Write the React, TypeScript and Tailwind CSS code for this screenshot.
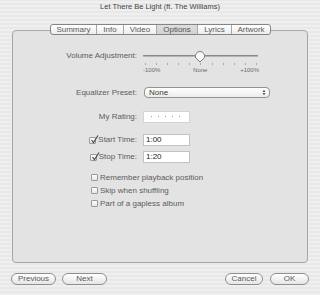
import React from "react"

const tabs = ["Summary", "Info", "Video", "Options", "Lyrics", "Artwork"]
const tabWidths = ["w-[45px]", "w-[27px]", "w-[33px]", "w-[41px]", "w-[34px]", "w-[39px]"]

function Check({ on }: { on?: boolean }) {
  return (
    <span className="relative w-[7px] h-[7px] shrink-0 rounded-[1px] border border-[#999] bg-[linear-gradient(#ffffff,#e6e6e6)]">
      {on && (
        <svg className="absolute -top-[3px] left-0" width="9" height="9" viewBox="0 0 9 9">
          <path d="M1.5 5 L3.5 7.5 L8 0.5" fill="none" stroke="#444" strokeWidth="1.1" />
        </svg>
      )}
    </span>
  )
}

function PillButton({ label, w }: { label: string; w: string }) {
  return (
    <button className={`${w} h-[12px] rounded-full border border-[#8f8f8f] bg-[linear-gradient(#ffffff,#e6e6e6)] text-[8px] leading-none text-[#5a5a5a] flex items-center justify-center`}>
      {label}
    </button>
  )
}

export default function App() {
  return (
    <div className="w-[320px] h-[295px] flex flex-col font-['Liberation_Sans',Arial,sans-serif] text-[8px] text-[#5c5c5c] bg-[repeating-linear-gradient(0deg,#efefef_0px,#efefef_2px,#e8e8e8_2px,#e8e8e8_4px)]">
      {/* title */}
      <div className="h-[13px] flex items-center justify-center text-[7.5px] text-[#444]">
        Let There Be Light (ft. The Williams)
      </div>

      {/* tabs */}
      <div className="relative z-10 mt-[11px] flex justify-center pl-[1px]">
        <div className="flex h-[11px] rounded-[3px] border border-[#858585] bg-[linear-gradient(#ffffff,#ededed)] overflow-hidden">
          {tabs.map((t, i) => (
            <div
              key={t}
              className={`${tabWidths[i]} flex items-center justify-center leading-none text-[8px] ${
                i > 0 ? "border-l border-[#a8a8a8]" : ""
              } ${t === "Options" ? "bg-[linear-gradient(#dedede,#d2d2d2)] text-[#555]" : "text-[#5a5a5a]"}`}
            >
              {t}
            </div>
          ))}
        </div>
      </div>

      {/* panel */}
      <div className="-mt-[5px] mx-[12px] h-[233px] rounded-[4px] border border-[#a6a6a6] bg-[#e3e3e3] flex flex-col">
        {/* volume */}
        <div className="mt-[19px] h-[12px] flex items-center">
          <div className="w-[124px] text-right">Volume Adjustment:</div>
          <div className="relative ml-[6px] w-[115px] h-[12px] flex items-center">
            <div className="w-full h-[2px] bg-[#b4b4b4] border-t border-[#8a8a8a]" />
            <svg className="absolute left-[51px] top-[1px]" width="12" height="12" viewBox="0 0 12 12">
              <path d="M6 11 L1.8 7 A4.6 4.6 0 1 1 10.2 7 Z" fill="#fafafa" stroke="#7a7a7a" strokeWidth="1" />
            </svg>
          </div>
        </div>
        <div className="ml-[132px] w-[112px] mt-[1px] h-[3px] flex justify-between">
          {Array.from({ length: 11 }).map((_, i) => (
            <span key={i} className="w-px h-[2px] bg-[#a8a8a8]" />
          ))}
        </div>
        <div className="ml-[130px] w-[116px] h-[8px] flex items-center justify-between text-[6px] text-[#6a6a6a] leading-none">
          <span>-100%</span>
          <span>None</span>
          <span>+100%</span>
        </div>

        {/* equalizer */}
        <div className="mt-[13px] h-[11px] flex items-center">
          <div className="w-[124px] text-right">Equalizer Preset:</div>
          <div className="ml-[7px] w-[126px] h-[11px] rounded-[4px] border border-[#939393] bg-[linear-gradient(#ffffff,#ececec)] flex items-center justify-between pl-[4px] pr-[3px] text-[#3a3a3a]">
            <span className="leading-none">None</span>
            <svg width="4" height="7" viewBox="0 0 4 7">
              <path d="M0.5 3 L2 0.8 L3.5 3 Z M0.5 4 L2 6.2 L3.5 4 Z" fill="#555" />
            </svg>
          </div>
        </div>

        {/* rating */}
        <div className="mt-[12px] h-[13px] flex items-center">
          <div className="w-[124px] text-right">My Rating:</div>
          <div className="ml-[6px] w-[47px] h-[12px] border border-[#d4d4d4] bg-white flex items-center pl-[7px] gap-[6px]">
            {Array.from({ length: 5 }).map((_, i) => (
              <span key={i} className="w-px h-px bg-[#999]" />
            ))}
          </div>
        </div>

        {/* start */}
        <div className="mt-[11px] h-[12px] flex items-center">
          <div className="w-[124px] flex items-center justify-end gap-[2px]">
            <Check on />
            <span>Start Time:</span>
          </div>
          <div className="ml-[6px] w-[47px] h-[12px] border border-[#c2c2c2] bg-white flex items-center pl-[2px] text-[#1a1a1a]">1:00</div>
        </div>

        {/* stop */}
        <div className="mt-[5px] h-[12px] flex items-center">
          <div className="w-[124px] flex items-center justify-end gap-[2px]">
            <Check on />
            <span>Stop Time:</span>
          </div>
          <div className="ml-[6px] w-[47px] h-[12px] border border-[#c2c2c2] bg-white flex items-center pl-[2px] text-[#1a1a1a]">1:20</div>
        </div>

        {/* options */}
        <div className="mt-[8px] ml-[78px] flex flex-col">
          {["Remember playback position", "Skip when shuffling", "Part of a gapless album"].map((l) => (
            <div key={l} className="h-[13px] flex items-center gap-[2px]">
              <Check />
              <span>{l}</span>
            </div>
          ))}
        </div>
      </div>

      {/* buttons */}
      <div className="mt-[10px] px-[11px] flex justify-between">
        <div className="flex gap-[6px]">
          <PillButton label="Previous" w="w-[45px]" />
          <PillButton label="Next" w="w-[45px]" />
        </div>
        <div className="flex gap-[7px]">
          <PillButton label="Cancel" w="w-[38px]" />
          <PillButton label="OK" w="w-[39px]" />
        </div>
      </div>
    </div>
  )
}
